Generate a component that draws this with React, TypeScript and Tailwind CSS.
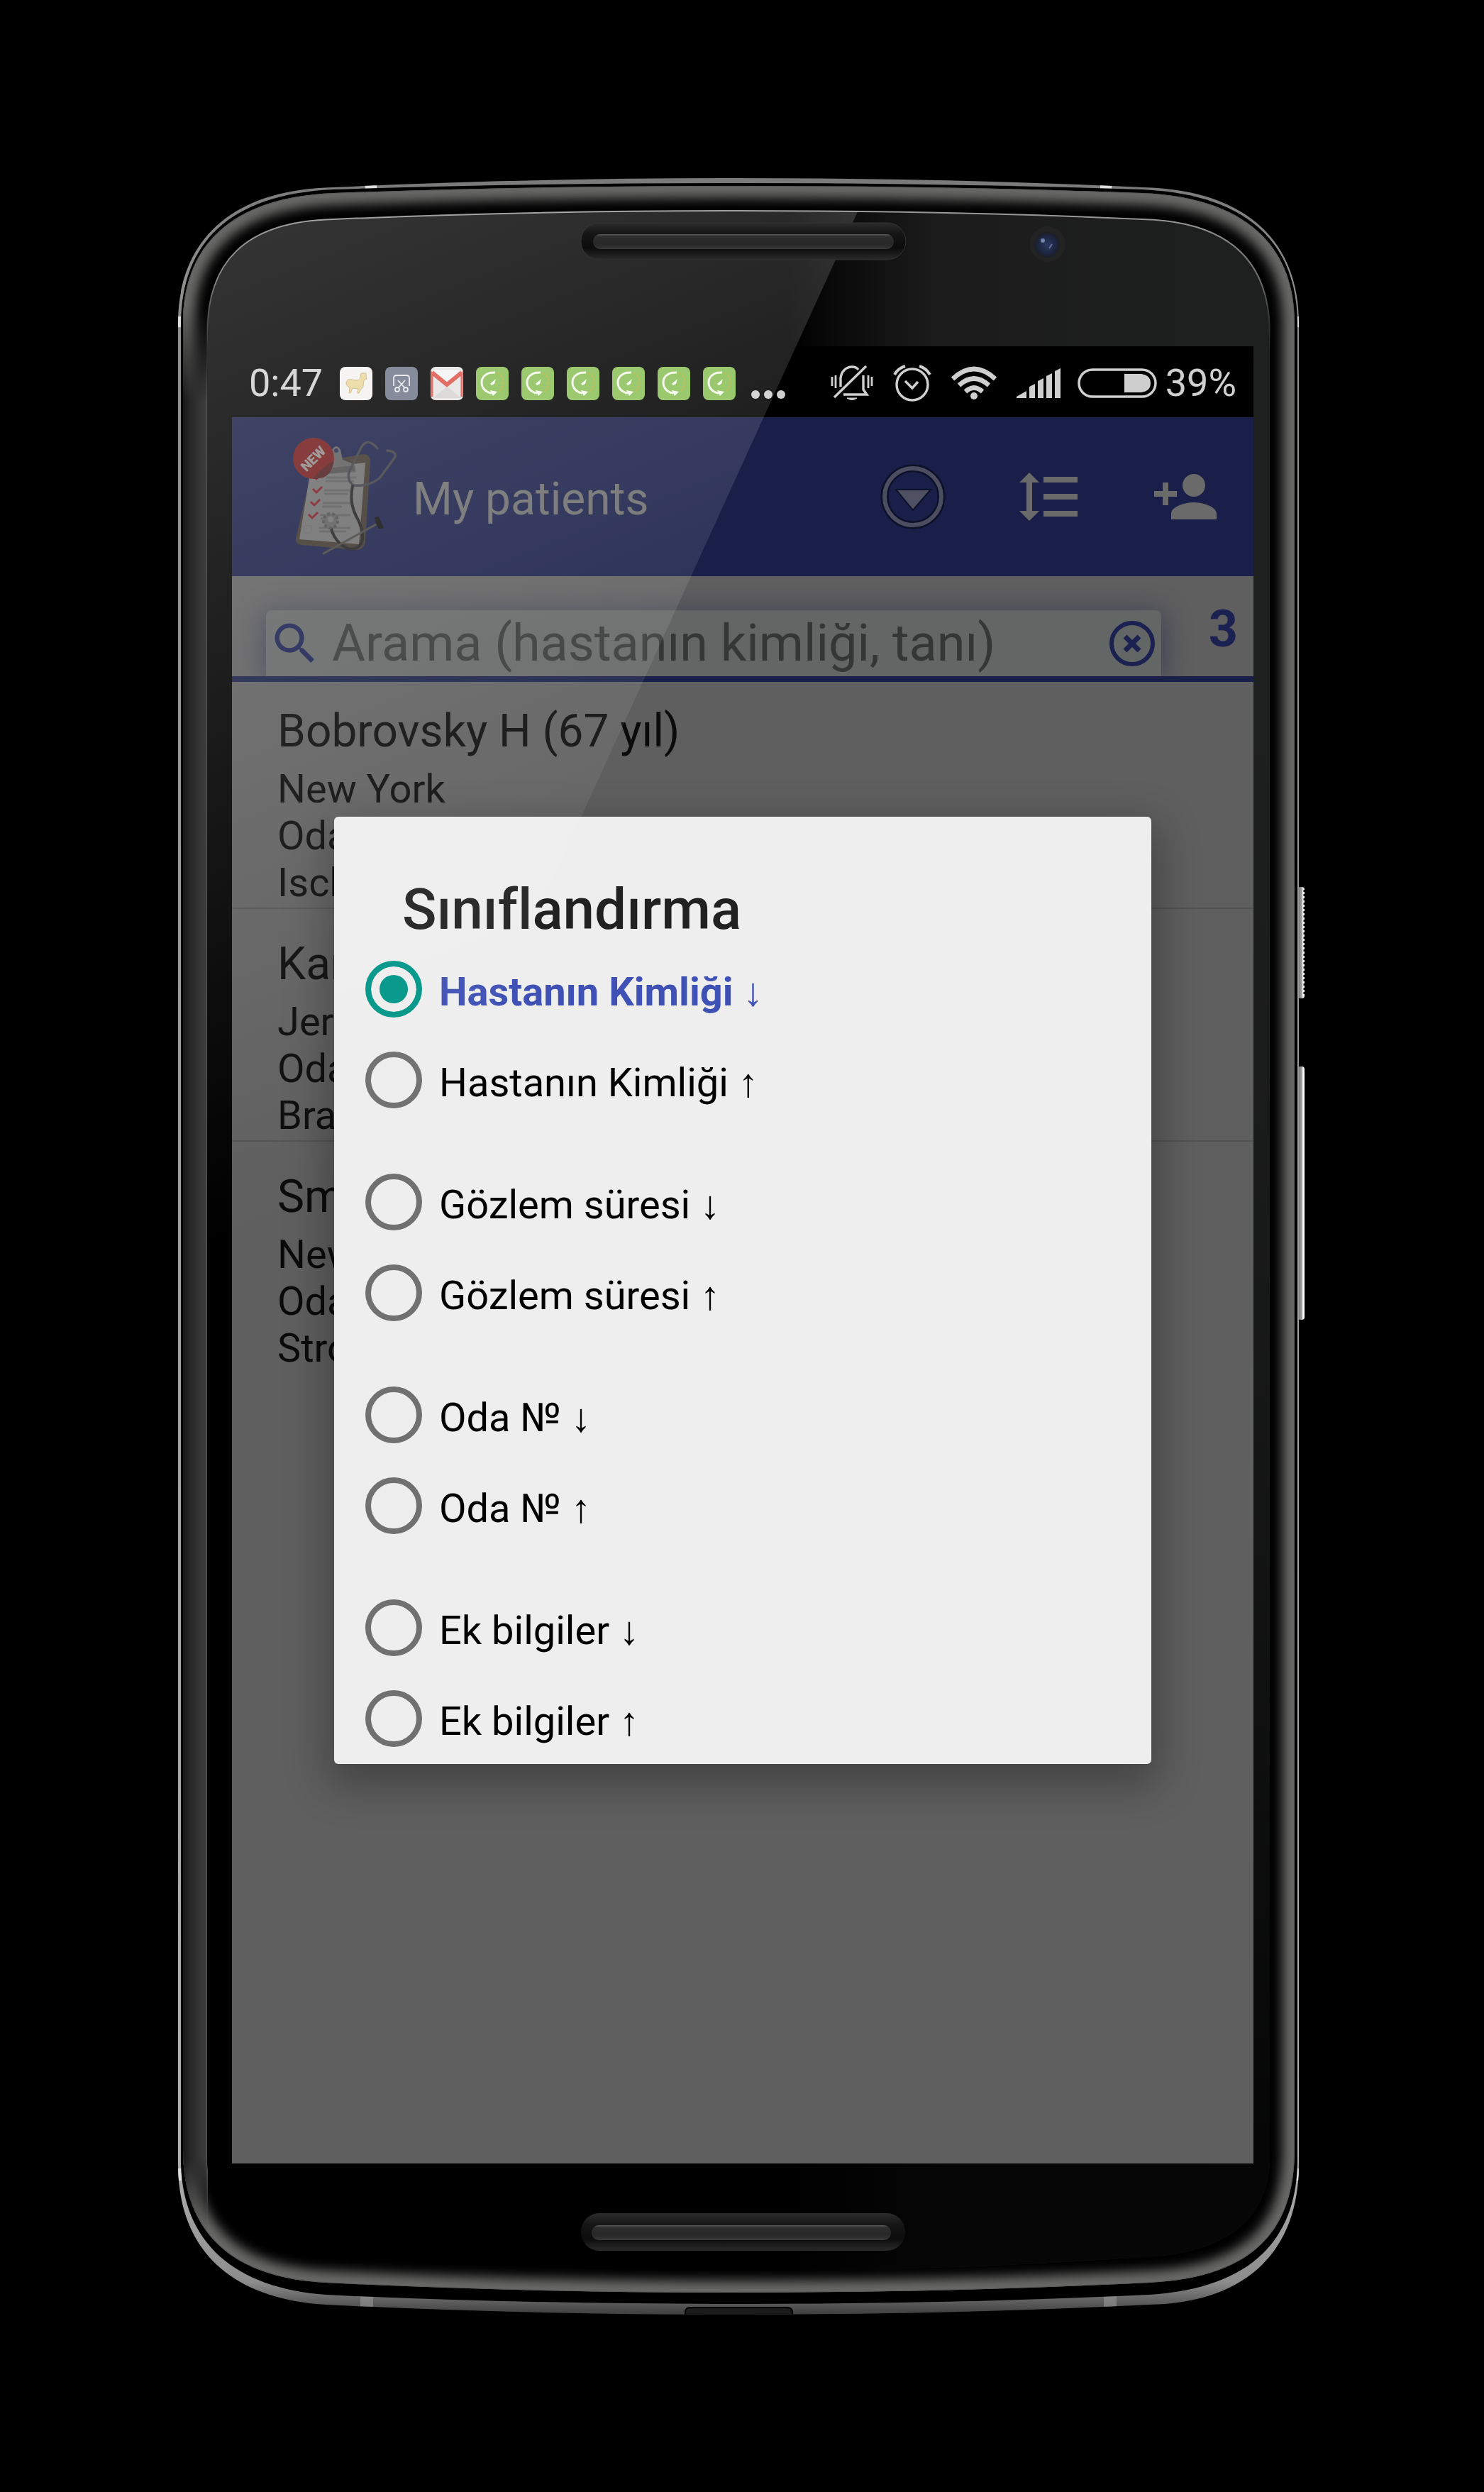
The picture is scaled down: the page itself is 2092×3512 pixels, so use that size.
import React, { useState } from "react";
import { MdFormatLineSpacing, MdPersonAdd, MdSearch } from "react-icons/md";

const FACE =
  "M292 470 C292 372 342 312 470 309 Q740 297 1040 297 T1610 309 C1738 312 1790 372 1790 470 V3040 C1790 3120 1738 3176 1610 3181 Q1340 3200 1040 3200 T470 3181 C344 3176 292 3120 292 3040 Z";
const BEVEL =
  "M258 455 C258 350 322 278 470 272 Q740 262 1040 262 T1610 272 C1760 278 1825 350 1825 455 V3030 C1825 3140 1770 3210 1620 3217 Q1340 3231 1040 3231 T460 3217 C320 3210 258 3140 258 3030 Z";
const RIM_INNER =
  "M255 455 C256 345 320 274 470 267 Q740 258 1040 258 T1610 267 C1762 274 1828 345 1829 455 V3050 C1826 3160 1760 3225 1620 3234 Q1340 3247 1040 3247 T460 3234 C330 3225 258 3160 255 3050 Z";
const RIM =
  "M251 455 C251 345 320 267 470 264 Q740 251 1040 251 T1610 264 C1762 267 1831 345 1831 455 V3050 C1831 3170 1760 3245 1620 3248 Q1340 3262 1040 3262 T460 3248 C325 3240 251 3170 251 3050 Z";

function PhoneBody() {
  return (
    <svg
      viewBox="250 250 1592 3014"
      preserveAspectRatio="none"
      className="absolute inset-0 h-full w-full"
      aria-hidden="true"
    >
      <defs>
        <linearGradient id="rim" gradientUnits="userSpaceOnUse" x1="0" y1="251" x2="0" y2="3262">
          <stop offset="0" stopColor="#7a7a7a" />
          <stop offset="0.05" stopColor="#8f8f8f" />
          <stop offset="0.93" stopColor="#b0b0b0" />
          <stop offset="0.985" stopColor="#8c8c8c" />
          <stop offset="1" stopColor="#3e3e3e" />
        </linearGradient>
        <linearGradient id="leftBevel" gradientUnits="userSpaceOnUse" x1="257" y1="0" x2="292" y2="0">
          <stop offset="0" stopColor="#141414" />
          <stop offset="0.3" stopColor="#262626" />
          <stop offset="0.75" stopColor="#363636" />
          <stop offset="0.95" stopColor="#3c3c3c" />
          <stop offset="1" stopColor="#5c5c5c" />
        </linearGradient>
        <linearGradient id="leftFade" x1="0" y1="0" x2="0" y2="1">
          <stop offset="0" stopColor="#000" />
          <stop offset="0.05" stopColor="#fff" />
          <stop offset="0.96" stopColor="#fff" />
          <stop offset="1" stopColor="#000" />
        </linearGradient>
        <mask id="leftMask">
          <rect x="250" y="430" width="60" height="2720" fill="url(#leftFade)" />
        </mask>
        <clipPath id="bevelClip">
          <path d={BEVEL} />
        </clipPath>
        <clipPath id="rimClip">
          <path d={RIM} />
        </clipPath>
        <filter id="soft" filterUnits="userSpaceOnUse" x="200" y="200" width="1700" height="3140">
          <feGaussianBlur stdDeviation="8" />
        </filter>
        <linearGradient id="face" gradientUnits="userSpaceOnUse" x1="1110" y1="0" x2="1790" y2="0">
          <stop offset="0" stopColor="#000" />
          <stop offset="0.12" stopColor="#0c0c0c" />
          <stop offset="0.32" stopColor="#1c1c1c" />
          <stop offset="1" stopColor="#1e201f" />
        </linearGradient>
        <linearGradient id="faceShade" gradientUnits="userSpaceOnUse" x1="0" y1="1000" x2="0" y2="3000">
          <stop offset="0" stopColor="#000" stopOpacity="0" />
          <stop offset="0.45" stopColor="#000" stopOpacity="0.25" />
          <stop offset="1" stopColor="#000" stopOpacity="0.8" />
        </linearGradient>
        <linearGradient id="faceEdge" gradientUnits="userSpaceOnUse" x1="0" y1="296" x2="0" y2="500">
          <stop offset="0" stopColor="#9a9a9a" />
          <stop offset="0.5" stopColor="#6a6a6a" />
          <stop offset="1" stopColor="#444" stopOpacity="0" />
        </linearGradient>
        <linearGradient id="slot" x1="0" y1="0" x2="0" y2="1">
          <stop offset="0" stopColor="#2c2c2c" />
          <stop offset="0.3" stopColor="#151515" />
          <stop offset="0.68" stopColor="#0c0c0c" />
          <stop offset="1" stopColor="#2a2a2a" />
        </linearGradient>
        <linearGradient id="bar" x1="0" y1="0" x2="0" y2="1">
          <stop offset="0" stopColor="#5c5c5c" />
          <stop offset="0.15" stopColor="#2e2e2e" />
          <stop offset="0.6" stopColor="#272727" />
          <stop offset="0.85" stopColor="#2f2f2f" />
          <stop offset="1" stopColor="#3c3c3c" />
        </linearGradient>
        <linearGradient id="sideKey" x1="0" y1="0" x2="1" y2="0">
          <stop offset="0" stopColor="#6e6e6e" />
          <stop offset="0.6" stopColor="#a0a0a0" />
          <stop offset="0.8" stopColor="#fff" />
        </linearGradient>
        <radialGradient id="lens">
          <stop offset="0" stopColor="#2c3a60" />
          <stop offset="0.7" stopColor="#1c2540" />
          <stop offset="1" stopColor="#1d1e24" />
        </radialGradient>
      </defs>

      <rect x="1829" y="1250" width="10" height="157" rx="4" fill="url(#sideKey)" />
      <path d="M1839 1254V1404" stroke="#000" strokeWidth="3" strokeDasharray="3 3" />
      <rect x="1829" y="1503" width="10" height="357" rx="4" fill="url(#sideKey)" />

      <path d={RIM} fill="url(#rim)" />
      <g clipPath="url(#rimClip)">
        <path d="M515 255h16v14h-16zM1551 255h16v14h-16zM251 446h5v15h-5zM1827 446h5v15h-5zM251 3056h5v17h-5zM1826 3056h5v17h-5z" fill="#dedede" />
        <path d="M508 3232h18v24h-18zM1556 3232h18v24h-18z" fill="#a2a2a2" opacity="0.5" />
        <path d="M966 3264v-5q0-7 7-7h137q7 0 7 7v5z" fill="#1b1b1b" stroke="#000" strokeWidth="2" />
      </g>
      <path d={RIM_INNER} fill="#000" />

      <g clipPath="url(#bevelClip)">
        <path d={BEVEL} fill="#000" />
        <path d={BEVEL} fill="none" stroke="#696968" strokeWidth="34" filter="url(#soft)" />
        <path d={BEVEL} fill="none" stroke="#5a5a5a" strokeWidth="2" />
        <rect x="257" y="430" width="36" height="2720" fill="url(#leftBevel)" mask="url(#leftMask)" />
      </g>

      <path d={FACE} fill="url(#face)" />
      <path d={FACE} fill="url(#faceShade)" />
      <path d={FACE} fill="none" stroke="url(#faceEdge)" strokeWidth="2" />

      <circle cx="1477" cy="344" r="25" fill="#242323" />
      <circle cx="1476" cy="345" r="18" fill="url(#lens)" />
      <circle cx="1470" cy="339" r="3" fill="#7485ae" />
      <path d="M1479 350l4-6" stroke="#64739c" strokeWidth="2" />

      <rect x="819" y="3119" width="457" height="53" rx="26" fill="url(#slot)" />
      <rect x="834" y="3136" width="422" height="21" rx="10" fill="url(#bar)" />
    </svg>
  );
}

function Glare() {
  return (
    <svg
      viewBox="250 250 1592 3014"
      preserveAspectRatio="none"
      className="pointer-events-none absolute inset-0 h-full w-full"
      aria-hidden="true"
    >
      <defs>
        <linearGradient id="glare" gradientUnits="userSpaceOnUse" x1="292" y1="296" x2="798" y2="1562">
          <stop offset="0" stopColor="#fff" stopOpacity="0.21" />
          <stop offset="1" stopColor="#fff" stopOpacity="0" />
        </linearGradient>
        <clipPath id="faceClip">
          <path d={FACE} />
        </clipPath>
      </defs>
      <path d="M292 296H1210L500 1850H292Z" fill="url(#glare)" clipPath="url(#faceClip)" />
      <rect x="819" y="314" width="458" height="52" rx="26" fill="url(#slot)" stroke="#333" strokeWidth="1" />
      <rect x="836" y="330" width="424" height="21" rx="10" fill="url(#bar)" />
    </svg>
  );
}

function AlpacaTile() {
  return (
    <svg viewBox="0 0 46 47" className="h-[47px] w-[46px]" aria-hidden="true">
      <rect width="46" height="47" rx="8" fill="#f3f2f0" />
      <path
        d="M34 9l3 0 0 5 1 3-4 2-1 8c0 3-2 3-3 4l-3 6h-2l1-6-8-1-3 7h-2l1-8c-3-1-5-3-5-7 1-4 4-5 8-4l7 1c4 0 5-4 6-10z"
        fill="#ead79a"
        stroke="#cbb680"
        strokeWidth="1"
      />
    </svg>
  );
}

function ScissorsTile() {
  return (
    <svg viewBox="0 0 46 47" className="h-[47px] w-[46px]" aria-hidden="true">
      <rect width="46" height="47" rx="8" fill="#6f7689" />
      <g fill="none" stroke="#e6e6ea" strokeWidth="1.8">
        <path d="M12 27V16q0-4 4-4h14q4 0 4 4v11" />
        <path d="M18 19l9 10M28 19l-9 10" />
        <circle cx="17" cy="32" r="3" />
        <circle cx="29" cy="32" r="3" />
      </g>
    </svg>
  );
}

function MailTile() {
  return (
    <svg viewBox="0 0 46 47" className="h-[47px] w-[46px]" aria-hidden="true">
      <rect width="46" height="47" rx="7" fill="#e6e4e3" />
      <path d="M3 44l20-16 20 16z" fill="#d6d4d3" />
      <path d="M4 4L23 24 42 4z" fill="#f4f3f3" />
      <path d="M2 42V9l21 17L44 9v33" fill="none" stroke="#d9534b" strokeWidth="3" />
      <path d="M2 8l21 17L44 8" fill="none" stroke="#dd5348" strokeWidth="6" strokeLinejoin="miter" />
    </svg>
  );
}

function RecorderTile() {
  return (
    <svg viewBox="0 0 46 47" className="h-[47px] w-[46px]" aria-hidden="true">
      <rect width="46" height="47" rx="8" fill="#8bc057" />
      <path d="M27 8C15 7 8 14 8 22c0 8 6 14 14 15" fill="none" stroke="#f1f7e8" strokeWidth="3" />
      <path d="M20 33l10 2-6 6z" fill="#f6faf0" />
      <path d="M31 9c6 3 8 9 7 15-1 5-3 8-6 10" fill="none" stroke="#c0b13c" strokeWidth="2.4" strokeDasharray="2.4 2.8" />
      <path d="M20 24l8-7-2 7-4 2z" fill="#f6faf0" />
    </svg>
  );
}

function MutedBell() {
  return (
    <svg viewBox="0 0 60 50" className="h-[50px] w-[60px]" fill="none" stroke="#cfcfcf" strokeWidth="3.4" aria-hidden="true">
      <path d="M50 1L5 45" />
      <path d="M14 30V18C15 8 22 2 30 2c4 0 7 1 9 4M46 14v20l5 7H18" />
      <path d="M23 46h14q-7 5-14 0z" fill="#cfcfcf" strokeWidth="1" />
      <path d="M2 16v13M7 14v18M53 14v18M58 16v13" strokeWidth="2.8" />
    </svg>
  );
}

function Alarm() {
  return (
    <svg viewBox="0 0 54 52" className="h-[52px] w-[54px]" fill="none" stroke="#cfcfcf" strokeWidth="3.4" aria-hidden="true">
      <circle cx="27" cy="28" r="22" />
      <path d="M17 23l10 10 8-9" />
      <path d="M2 14Q7 5 17 2M52 14Q47 5 37 2" strokeWidth="4" />
    </svg>
  );
}

function Wifi() {
  return (
    <svg viewBox="0 0 64 48" className="h-12 w-16" fill="none" stroke="#cfcfcf" strokeWidth="6.5" aria-hidden="true">
      <path d="M2 18Q32-10 62 18" />
      <path d="M11 27Q32 8 53 27" />
      <path d="M20 36Q32 25 44 36" />
      <circle cx="32" cy="42" r="5" fill="#cfcfcf" stroke="none" />
    </svg>
  );
}

function Signal() {
  return (
    <svg viewBox="0 0 62 42" className="h-[42px] w-[62px]" fill="#cfcfcf" aria-hidden="true">
      <path d="M0 42v-2l14-8v10zM18 42V26l8-4v20zM30 42V18l8-4v28zM42 42V11l8-4v35zM54 42V4l8-4v42z" />
    </svg>
  );
}

function Battery() {
  return (
    <svg viewBox="0 0 112 42" className="h-[42px] w-[112px]" fill="none" aria-hidden="true">
      <rect x="2" y="2" width="108" height="38" rx="19" stroke="#cfcfcf" strokeWidth="3.5" />
      <path d="M66 8h24q13 2 13 13t-13 13H66z" fill="#cfcfcf" />
    </svg>
  );
}

function ClipboardLogo() {
  const ticks = ["M29 53l5 5 8-8", "M29 72l5 5 8-8", "M26 90l5 5 8-8", "M23 108l5 5 8-8"];
  return (
    <svg viewBox="0 0 148 166" className="h-[166px] w-[148px]" aria-hidden="true">
      <path d="M30 36L100 23q10 0 10 10l-7 112q-1 14-14 13L13 151q-9-1-8-9z" fill="#3c342c" />
      <path d="M26 44l77-9-9 115-84-7z" fill="#6c6c6c" />
      <path d="M48 56h42M47 61h40M45 74h36M45 79h34M43 92h40M42 97h28M40 109h42M40 114h20M38 127h44M38 132h38" stroke="#5a5a5a" strokeWidth="3" />
      <path d="M17 124h10v10H17z" fill="none" stroke="#606060" strokeWidth="1" />
      <path d="M34 54l24-24c-1-3-3-8-2-13q6-10 12 0l3 14 16 6 3 12-48 2z" fill="#5c5c5c" />
      <path d="M38 52l10-9 40-4 1 8z" fill="#4a4a4a" />
      <circle cx="62" cy="18" r="3" fill="#24294c" />
      {ticks.map((d) => (
        <path key={d} d={d} fill="none" stroke="#7c1a22" strokeWidth="3" />
      ))}
      <circle cx="30" cy="29" r="29" fill="#711a1b" />
      <path d="M30 58q4-10 28-26-1 18-14 24z" fill="#4e1c1c" />
      <text x="30" y="36" textAnchor="middle" fontFamily="Roboto, sans-serif" fontWeight="900" fontSize="19" fill="#8f8a8a" transform="rotate(-45 30 30)">
        NEW
      </text>
      <g fill="none" strokeWidth="3.4" strokeLinecap="round">
        <path d="M120 15Q106-2 97 14 87 34 80 48q-3 14 7 19 20 2 36-10l22-30q2-8-11-9" stroke="#3c3d42" />
        <path d="M85 68c-4 20 0 34 8 48 10 22 8 38-8 41-18-1-30-20-32-38" stroke="#202020" strokeWidth="4" />
        <path d="M44 163l76-42" stroke="#44443f" strokeWidth="3" />
      </g>
      <circle cx="54" cy="117" r="10" fill="#5c5c5c" stroke="#4a4a4a" strokeWidth="4" strokeDasharray="4 3" />
      <circle cx="54" cy="115" r="4" fill="#707070" />
      <path d="M116 112l6-1 3 7 4 9-7 1-4-7z" fill="#101010" />
    </svg>
  );
}

function StatusBar() {
  return (
    <div className="flex h-[100px] items-center bg-black pl-6 pr-6 pt-1 text-[54px] leading-none text-[#cfcfcf]">
      <span className="w-32">0:47</span>
      <div className="flex flex-1 items-center gap-[18px]">
        <AlpacaTile />
        <ScissorsTile />
        <MailTile />
        {[1, 2, 3, 4, 5, 6].map((n) => (
          <RecorderTile key={n} />
        ))}
        <svg viewBox="0 0 50 47" className="ml-1 h-[47px] w-[50px]" fill="#cfcfcf" aria-hidden="true">
          <circle cx="6" cy="39" r="6" />
          <circle cx="24" cy="39" r="6" />
          <circle cx="42" cy="39" r="6" />
        </svg>
      </div>
      <div className="flex items-center">
        <div className="flex items-center gap-7">
          <MutedBell />
          <Alarm />
          <Wifi />
          <Signal />
        </div>
        <div className="ml-6 flex items-center gap-3">
          <Battery />
          <span>39%</span>
        </div>
      </div>
    </div>
  );
}

function AppBar() {
  return (
    <header className="flex h-56 items-center bg-[#191f48] pl-[85px] pr-12">
      <ClipboardLogo />
      <h1 className="ml-[22px] flex-1 pt-2 text-[64px] leading-none text-[#6c6c6c]">My patients</h1>
      <div className="flex items-center gap-24 text-[#6a6a6a]">
        <button type="button" aria-label="More" className="size-24">
          <svg viewBox="0 0 96 96" className="size-24" aria-hidden="true">
            <circle cx="48" cy="48" r="40" fill="none" stroke="#0d1128" strokeWidth="11" />
            <circle cx="48" cy="48" r="40" fill="none" stroke="#4b4d60" strokeWidth="6" />
            <path d="M24 38h49L48 67z" fill="#4f5062" stroke="#0d1128" strokeWidth="2" />
          </svg>
        </button>
        <button type="button" aria-label="Sort" className="size-24">
          <MdFormatLineSpacing className="size-24" />
        </button>
        <button type="button" aria-label="Add patient" className="size-24">
          <MdPersonAdd className="size-24" />
        </button>
      </div>
    </header>
  );
}

function SearchBar() {
  return (
    <div className="flex h-[149px] items-end overflow-hidden border-b-8 border-[#191f48] pl-12">
      <div className="flex h-[93px] min-w-0 flex-1 items-center rounded-t-lg bg-[#626664] pl-[3px] pr-2 shadow-[0_6px_36px_2px_rgba(25,31,72,0.55)]">
        <MdSearch className="size-[76px] shrink-0 text-[#1b2150]" aria-hidden="true" />
        <input
          type="search"
          aria-label="Arama"
          placeholder="Arama (hastanın kimliği, tanı)"
          className="ml-3.5 min-w-0 flex-1 bg-transparent text-[72px] leading-[92px] outline-none placeholder:text-[#343736]"
        />
        <button type="button" aria-label="Clear" className="size-[66px] shrink-0">
          <svg viewBox="0 0 66 66" className="size-[66px]" fill="none" stroke="#1b2150" aria-hidden="true">
            <circle cx="33" cy="33" r="29" strokeWidth="6" />
            <path d="M23 23l20 20M43 23L23 43" strokeWidth="7" />
          </svg>
        </button>
      </div>
      <span className="w-[130px] pb-[30px] pr-[22px] text-right text-[72px] font-bold leading-[72px] text-[#1b2150]">3</span>
    </div>
  );
}

const patients = [
  { name: "Bobrovsky H (67 yıl)", lines: ["New York", "Oda 1", "Isch"] },
  { name: "Karl", lines: ["Jers", "Oda 2", "Brai"] },
  { name: "Smit", lines: ["New", "Oda 3", "Stro"] },
];

function PatientList() {
  return (
    <ul className="flex-1 text-[#0b0b0b]">
      {patients.map((p) => (
        <li key={p.name} className="border-b-2 border-[#525252] pb-0.5 pl-16 pt-10 first:pt-8 last:border-b-0">
          <h2 className="mb-2.5 text-[64px] leading-[76px]">{p.name}</h2>
          {p.lines.map((line) => (
            <p key={line} className="text-[56px] leading-[66px]">
              {line}
            </p>
          ))}
        </li>
      ))}
    </ul>
  );
}

const groups = ["Hastanın Kimliği", "Gözlem süresi", "Oda №", "Ek bilgiler"];

function SortDialog() {
  const [selected, setSelected] = useState("Hastanın Kimliği ↓");
  return (
    <div
      role="dialog"
      aria-labelledby="sort-title"
      className="absolute inset-x-36 top-[663px] rounded-md bg-[#eeeeee] pt-[83px] shadow-[0_20px_60px_10px_rgba(0,0,0,0.3)]"
    >
      <h2
        id="sort-title"
        className="pl-24 text-[80px] font-medium leading-[96px] text-[#212121] [font-variant-ligatures:none]"
      >
        Sınıflandırma
      </h2>
      <div role="radiogroup" aria-labelledby="sort-title" className="flex flex-col gap-11">
        {groups.map((group) => (
          <div key={group}>
            {["↓", "↑"].map((arrow) => {
              const value = `${group} ${arrow}`;
              return (
                <label key={value} className="flex h-32 items-center gap-6 pl-11">
                  <input
                    type="radio"
                    name="sort"
                    checked={selected === value}
                    onChange={() => setSelected(value)}
                    className="size-20 shrink-0 appearance-none rounded-full border-8 border-[#707070] checked:border-[#009688] checked:bg-[#009688] checked:shadow-[inset_0_0_0_12px_#eeeeee]"
                  />
                  <span
                    className={
                      selected === value
                        ? "pt-2 text-[56px] font-bold leading-[66px] text-[#3f51b5]"
                        : "pt-2 text-[56px] leading-[66px] text-black"
                    }
                  >
                    {value}
                  </span>
                </label>
              );
            })}
          </div>
        ))}
      </div>
    </div>
  );
}

export default function App() {
  return (
    <main className="flex min-h-screen justify-center bg-black pb-[248px] pt-[250px] font-['Roboto','Liberation_Sans',sans-serif]">
      <div className="relative flex aspect-[1592/3014] w-full max-w-[1592px] flex-col pb-[215px] pl-[77px] pr-[75px] pt-[238px]">
        <PhoneBody />
        <div className="relative flex flex-1 flex-col bg-[#5f5f5f]">
          <StatusBar />
          <AppBar />
          <SearchBar />
          <PatientList />
          <SortDialog />
        </div>
        <Glare />
      </div>
    </main>
  );
}
